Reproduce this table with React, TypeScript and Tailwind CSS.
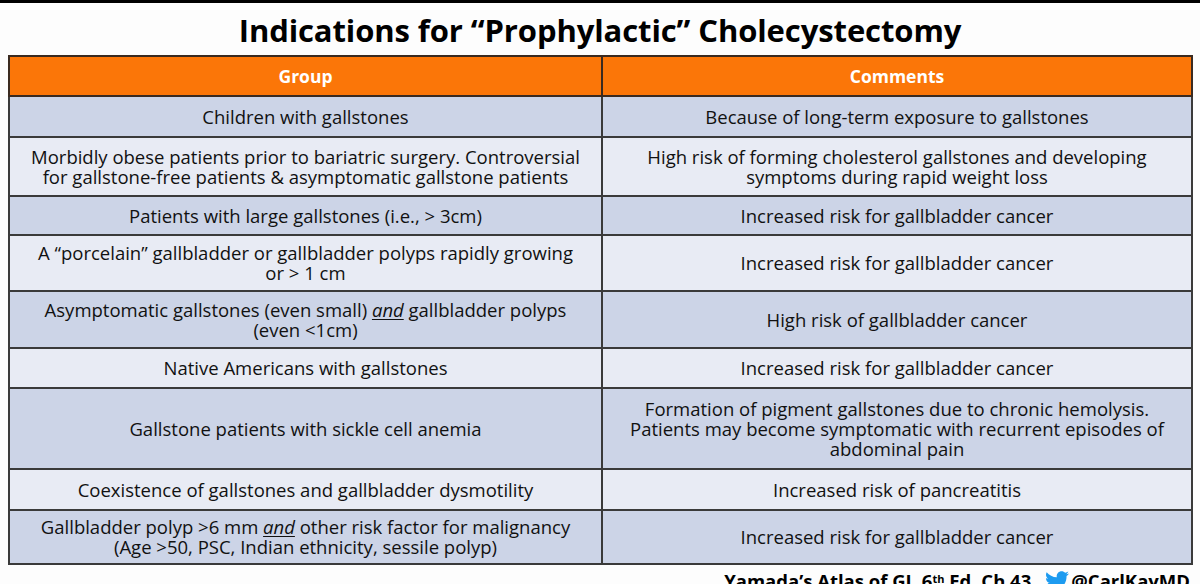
import React from 'react';
import { FaTwitter } from 'react-icons/fa';

type Row = {
  group: React.ReactNode;
  comment: React.ReactNode;
  h: string;
};

const And = () => <em className="underline underline-offset-2 decoration-1">and</em>;

const rows: Row[] = [
  { group: 'Children with gallstones', comment: 'Because of long-term exposure to gallstones', h: 'h-[41px]' },
  {
    group: (
      <>
        Morbidly obese patients prior to bariatric surgery. Controversial
        <br />
        for gallstone-free patients &amp; asymptomatic gallstone patients
      </>
    ),
    comment: (
      <>
        High risk of forming cholesterol gallstones and developing
        <br />
        symptoms during rapid weight loss
      </>
    ),
    h: 'h-[59px]',
  },
  { group: 'Patients with large gallstones (i.e., > 3cm)', comment: 'Increased risk for gallbladder cancer', h: 'h-[39px]' },
  {
    group: (
      <>
        A “porcelain” gallbladder or gallbladder polyps rapidly growing
        <br />
        or &gt; 1 cm
      </>
    ),
    comment: 'Increased risk for gallbladder cancer',
    h: 'h-[56px]',
  },
  {
    group: (
      <>
        Asymptomatic gallstones (even small) <And /> gallbladder polyps
        <br />
        (even &lt;1cm)
      </>
    ),
    comment: 'High risk of gallbladder cancer',
    h: 'h-[57px]',
  },
  { group: 'Native Americans with gallstones', comment: 'Increased risk for gallbladder cancer', h: 'h-[40px]' },
  {
    group: 'Gallstone patients with sickle cell anemia',
    comment: (
      <>
        Formation of pigment gallstones due to chronic hemolysis.
        <br />
        Patients may become symptomatic with recurrent episodes of
        <br />
        abdominal pain
      </>
    ),
    h: 'h-[81px]',
  },
  { group: 'Coexistence of gallstones and gallbladder dysmotility', comment: 'Increased risk of pancreatitis', h: 'h-[41px]' },
  {
    group: (
      <>
        Gallbladder polyp &gt;6 mm <And /> other risk factor for malignancy
        <br />
        (Age &gt;50, PSC, Indian ethnicity, sessile polyp)
      </>
    ),
    comment: 'Increased risk for gallbladder cancer',
    h: 'h-[54px]',
  },
];

export default function App() {
  return (
    <div
      className="w-[1200px] h-[584px] overflow-hidden bg-[#fdfdfd] text-[#111] flex flex-col"
      style={{ fontFamily: '"Open Sans", "Liberation Sans", sans-serif' }}
    >
      <div className="h-[3px] bg-black shrink-0" />
      <h1 className="h-[52px] shrink-0 flex items-center justify-center text-[31px] font-bold text-black tracking-[-0.1px] leading-none pt-[3px]">
        Indications for “Prophylactic” Cholecystectomy
      </h1>
      <div className="px-[8px] pr-[7px] shrink-0">
        <table className="w-full border-collapse border-2 border-[#3a3a3a] table-fixed">
          <colgroup>
            <col className="w-[593px]" />
            <col />
          </colgroup>
          <thead>
            <tr className="h-[40px] bg-[#fb7608]">
              <th className="border-2 border-[#3a2a20] text-white text-[17.5px] font-bold text-center align-middle">
                Group
              </th>
              <th className="border-2 border-[#3a2a20] text-white text-[17.5px] font-bold text-center align-middle">
                Comments
              </th>
            </tr>
          </thead>
          <tbody>
            {rows.map((r, i) => (
              <tr key={i} className={`${r.h} ${i % 2 === 0 ? 'bg-[#ccd4e7]' : 'bg-[#e8ebf4]'}`}>
                <td className="border-2 border-[#3a3a3a] text-center align-middle text-[18.5px] font-medium leading-[20px] px-1">
                  {r.group}
                </td>
                <td className="border-2 border-[#3a3a3a] text-center align-middle text-[18.5px] font-medium leading-[20px] px-1">
                  {r.comment}
                </td>
              </tr>
            ))}
          </tbody>
        </table>
      </div>
      <div className="shrink-0 flex items-center justify-end gap-[14px] pr-[10px] pt-[2px] text-[18.5px] font-bold text-black whitespace-nowrap">
        <span>
          Yamada’s Atlas of GI, 6<sup className="text-[11px]">th</sup> Ed. Ch 43
        </span>
        <span className="flex items-center gap-[2px]">
          <FaTwitter className="text-[#1d9bf0] w-[24px] h-[24px]" />
          @CarlKayMD
        </span>
      </div>
    </div>
  );
}
